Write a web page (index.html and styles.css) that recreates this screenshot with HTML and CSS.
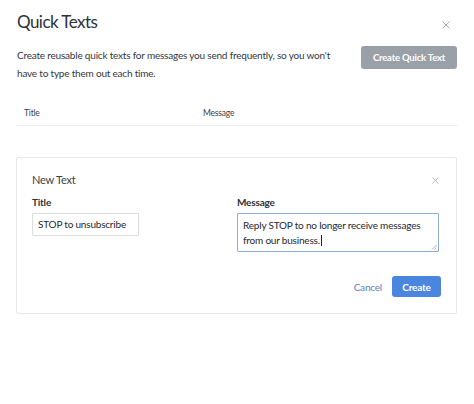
FILE: index.html
```html
<!DOCTYPE html>
<html>
<head>
<meta charset="utf-8">
<link rel="stylesheet" href="styles.css">
</head>
<body>
<div class="modal">
  <div class="head">
    <h1 class="title">Quick Texts</h1>
    <svg class="close" width="8" height="8" viewBox="0 0 8 8"><path d="M0.5 0.5L7.5 7.5M7.5 0.5L0.5 7.5" stroke="#a9adb3" stroke-width="1"/></svg>
  </div>
  <div class="intro">
    <p class="desc">Create reusable quick texts for messages you send frequently, so you won't have to type them out each time.</p>
    <button class="btn-grey">Create Quick Text</button>
  </div>
  <div class="thead">
    <div class="th th-title">Title</div>
    <div class="th">Message</div>
  </div>
  <div class="card">
    <div class="card-head">
      <span class="card-title">New Text</span>
      <svg class="close-sm" width="7" height="7" viewBox="0 0 7 7"><path d="M0.5 0.5L6.5 6.5M6.5 0.5L0.5 6.5" stroke="#b0b4ba" stroke-width="0.9"/></svg>
    </div>
    <div class="fields">
      <div class="field field-title">
        <label class="label">Title</label>
        <div class="input">STOP to unsubscribe</div>
      </div>
      <div class="field field-msg">
        <label class="label">Message</label>
        <div class="textarea">Reply STOP to no longer receive messages<br>from our business.<span class="caret"></span>
          <svg class="grip" width="6" height="6" viewBox="0 0 6 6"><path d="M5.5 1L1 5.5M5.5 3.5L3.5 5.5" stroke="#9a9a9a" stroke-width="0.8"/></svg>
        </div>
      </div>
    </div>
    <div class="actions">
      <span class="cancel">Cancel</span>
      <button class="btn-blue">Create</button>
    </div>
  </div>
</div>
</body>
</html>
```
FILE: styles.css
```css
* { box-sizing: border-box; }
html, body { margin: 0; padding: 0; background: #ffffff; }
body {
  font-family: "Lato", "Noto Sans", sans-serif;
  color: #333740;
  width: 474px;
  height: 404px;
  overflow: hidden;
}
.modal { padding: 10px 17px 0 17px; }
.head { display: flex; justify-content: space-between; align-items: flex-start; height: 24px; }
.title { margin: 0; font-size: 17px; font-weight: 400; line-height: 24px; color: #2d3138; letter-spacing: -0.55px; }
.close { margin-top: 11px; margin-right: 7px; }
.intro { display: flex; justify-content: space-between; align-items: flex-start; margin-top: 12px; }
.desc { margin: 0; width: 318px; font-size: 10px; letter-spacing: -0.2px; line-height: 18px; color: #33373e; }
.btn-grey {
  width: 96px; height: 23px;
  border: none; border-radius: 3px;
  background: #9aa0a8; color: #fff;
  font-family: inherit; font-size: 9.5px; letter-spacing: -0.2px; font-weight: 700;
  padding: 0;
}
.thead { display: flex; margin-top: 25px; border-bottom: 1px solid #ededef; padding-bottom: 6px; }
.th { font-size: 8.5px; letter-spacing: -0.2px; line-height: 12px; color: #3a3e45; padding-left: 7px; }
.th-title { width: 179px; }
.card {
  margin-top: 31px;
  margin-left: -1px;
  border: 1px solid #e7e8ea;
  border-radius: 2px;
  height: 157px;
  padding: 15px 15px 0 15px;
}
.card-head { display: flex; justify-content: space-between; align-items: center; height: 14px; }
.card-title { font-size: 11px; letter-spacing: -0.2px; line-height: 14px; color: #3d4148; }
.close-sm { margin-right: 2px; }
.fields { display: flex; margin-top: 9px; }
.field-title { width: 205px; }
.field-msg { flex: 1; }
.label { display: block; font-size: 10px; letter-spacing: -0.2px; font-weight: 700; color: #2f3238; line-height: 12px; }
.input {
  margin-top: 5px;
  width: 107px; height: 23px;
  border: 1px solid #dcdde0;
  border-radius: 1px;
  padding: 0 5px;
  font-size: 10px; letter-spacing: -0.2px; line-height: 21px; color: #26292e;
}
.textarea {
  position: relative;
  margin-top: 5px;
  width: 202px; height: 39px;
  border: 1px solid #8eabdb;
  border-radius: 1px;
  padding: 4px 5px 0 5px;
  font-size: 10px; letter-spacing: -0.2px; line-height: 15px; color: #26292e;
}
.caret { display: inline-block; width: 1px; height: 11px; background: #222; vertical-align: -2px; margin-left: 1px; }
.grip { position: absolute; right: 1px; bottom: 1px; }
.actions { display: flex; justify-content: flex-end; align-items: center; margin-top: 24px; }
.cancel { font-size: 10px; letter-spacing: -0.2px; color: #5b7dc0; margin-right: 10px; }
.btn-blue {
  width: 49px; height: 21px;
  border: none; border-radius: 3px;
  background: #4a86e0; color: #fff;
  font-family: inherit; font-size: 10px; letter-spacing: -0.2px; font-weight: 700;
  padding: 0;
}
```
